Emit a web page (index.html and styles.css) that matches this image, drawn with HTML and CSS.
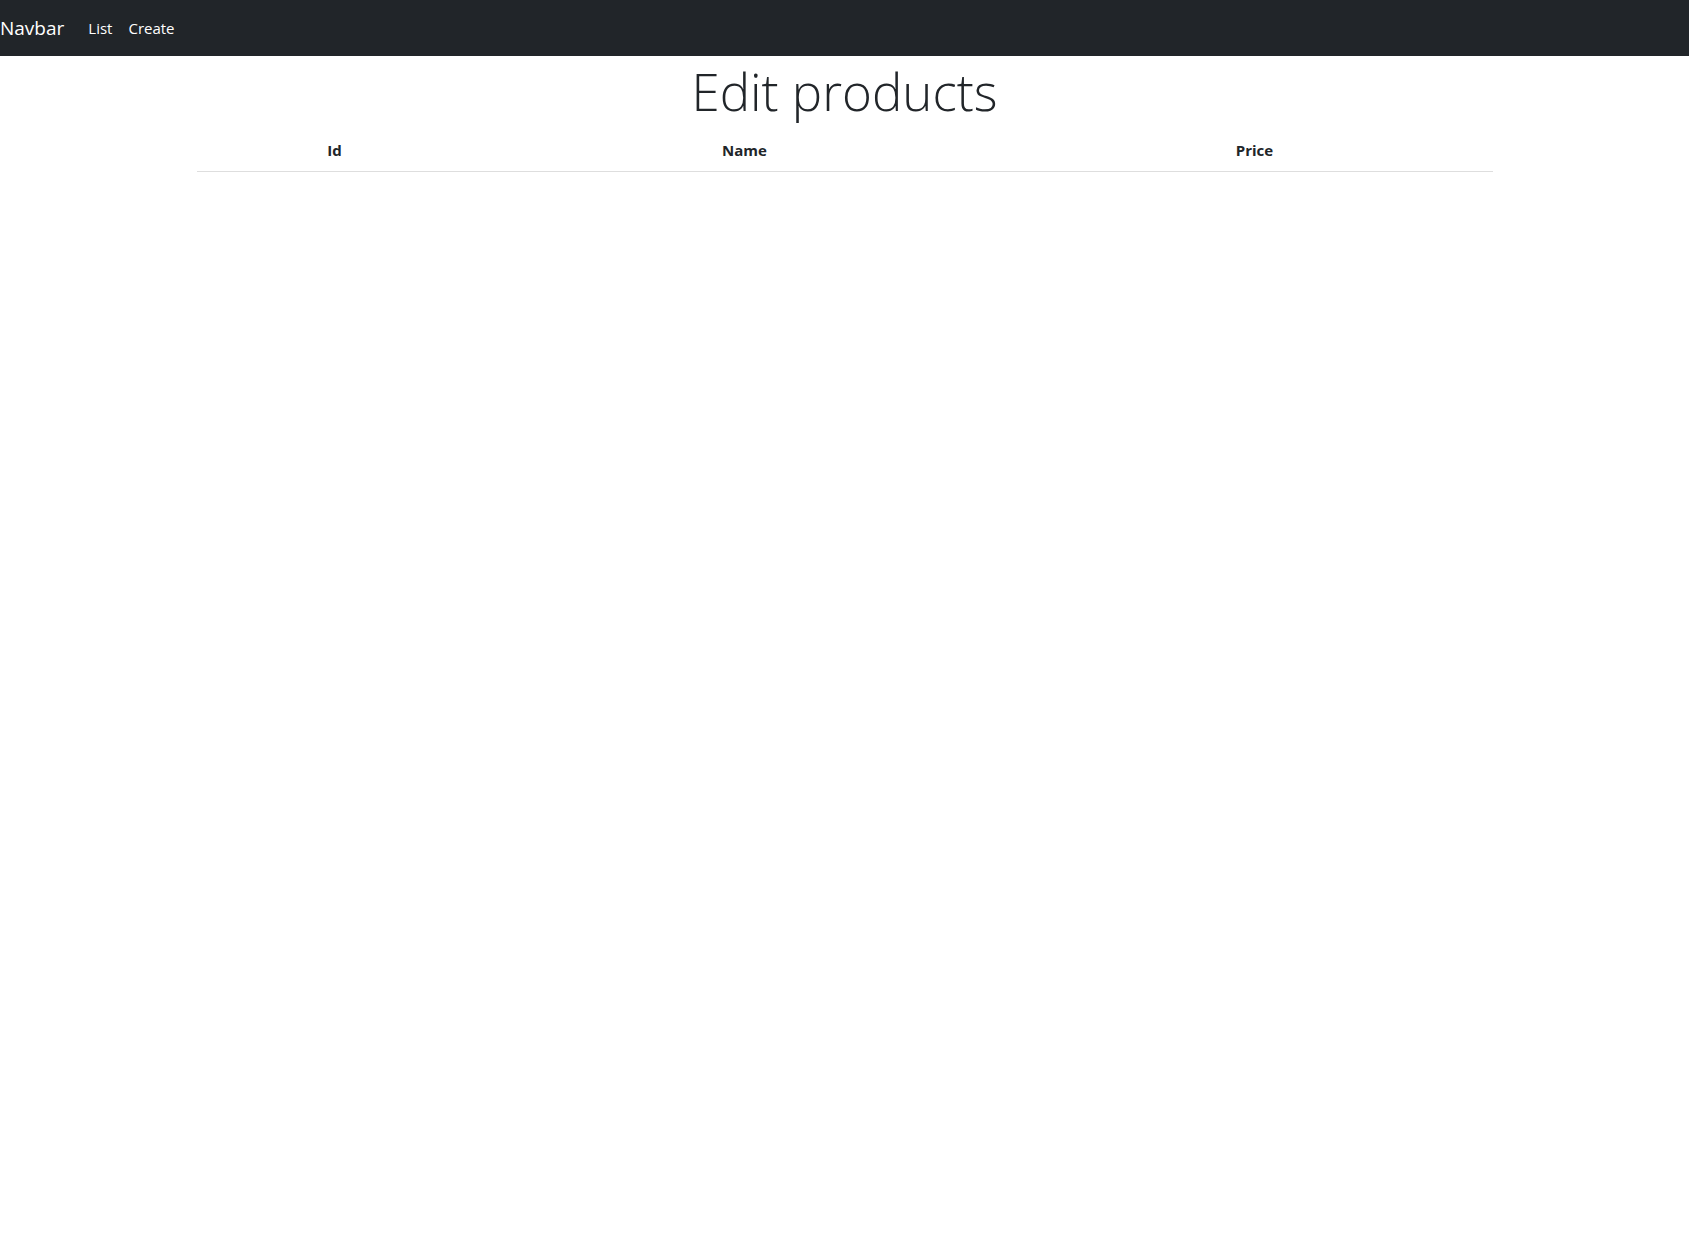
FILE: index.html
```html
<!DOCTYPE html>
<html lang="en">
<head>
<meta charset="utf-8">
<title>Edit products</title>
<link rel="stylesheet" href="styles.css">
</head>
<body>
<nav class="navbar">
  <a class="brand" href="#">Navbar</a>
  <ul class="nav">
    <li><a class="nav-link" href="#">List</a></li>
    <li><a class="nav-link" href="#">Create</a></li>
  </ul>
</nav>
<main class="content">
  <h1 class="title">Edit products</h1>
  <table class="table">
    <thead>
      <tr>
        <th class="col-id">Id</th>
        <th class="col-name">Name</th>
        <th class="col-price">Price</th>
      </tr>
    </thead>
    <tbody></tbody>
  </table>
</main>
</body>
</html>
```
FILE: styles.css
```css
html, body {
  margin: 0;
  padding: 0;
  background: #fff;
}
body {
  font-family: "Open Sans", "Noto Sans", "Liberation Sans", sans-serif;
  font-size: 16px;
  line-height: 1.5;
  color: #212529;
}
.navbar {
  display: flex;
  align-items: center;
  height: 56px;
  background: #212529;
  padding: 0;
  box-sizing: border-box;
}
.brand {
  color: #fff;
  text-decoration: none;
  font-size: 19px;
  line-height: 30px;
  padding: 5px 0;
  margin-right: 16px;
}
.nav {
  display: flex;
  list-style: none;
  margin: 0;
  padding: 0;
}
.nav-link {
  display: block;
  color: #fff;
  text-decoration: none;
  font-size: 15px;
  padding: 8px;
}
.content {
  display: flex;
  flex-direction: column;
  align-items: center;
}
.title {
  margin: 0 0 2px;
  padding-top: 5px;
  font-size: 51px;
  font-weight: 300;
  line-height: 1.2;
  text-align: center;
  color: #212529;
}
.table {
  width: 1296px;
  border-collapse: collapse;
}
.table th {
  padding: 15px 12px 9px;
  font-size: 15px;
  font-weight: 700;
  text-align: center;
  border-bottom: 1px solid #dedede;
  vertical-align: bottom;
}
.col-id { width: 252px; }
.col-name { width: 520px; }
.col-price { width: 452px; }
```
